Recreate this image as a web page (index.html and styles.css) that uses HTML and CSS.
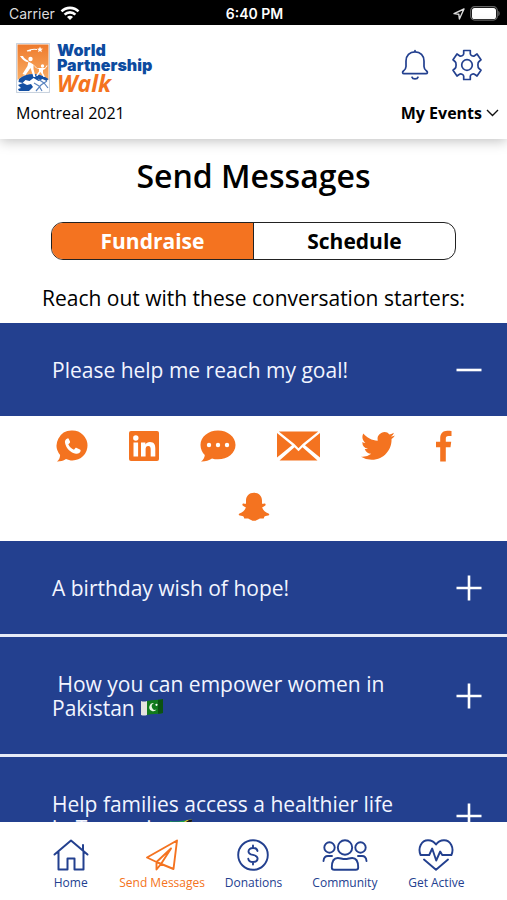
FILE: index.html
```html
<!DOCTYPE html>
<html lang="en">
<head>
<meta charset="utf-8">
<meta name="viewport" content="width=device-width, initial-scale=1">
<title>Send Messages</title>
<link rel="stylesheet" href="styles.css">
</head>
<body>
<div class="status">
  <div class="status-left">
    <span>Carrier</span>
    <svg width="20" height="15" viewBox="0 0 20 15" fill="none" stroke="#fff" stroke-width="2.6"><path d="M1.5 5.4a12 12 0 0 1 17 0M4.6 8.6a7.6 7.6 0 0 1 10.8 0"/><path d="M10 14l-3-3a4.2 4.2 0 0 1 6 0z" fill="#fff" stroke="none"/></svg>
  </div>
  <span class="status-time">6:40 PM</span>
  <div class="status-right">
    <svg width="12" height="12" viewBox="0 0 12 12" fill="none" stroke="#ddd" stroke-width="1.4" stroke-linejoin="round"><path d="M11 1L1 5.6l4.8.6.6 4.8z"/></svg>
    <svg width="30" height="15" viewBox="0 0 30 15"><rect x=".7" y=".7" width="26.6" height="13.4" rx="4" fill="none" stroke="#666" stroke-width="1.2"/><rect x="2" y="2" width="24" height="11" rx="2.6" fill="#fff"/><path d="M28.4 5c1.6.6 1.6 4.400 0 5z" fill="#777"/></svg>
  </div>
</div>

<header class="header">
  <div class="header-row">
    <a class="logo" href="#" aria-label="World Partnership Walk">
      <svg width="34" height="50" viewBox="0 0 34 50">
        <defs><linearGradient id="sky" x1="0" y1="0" x2="0" y2="1"><stop offset="0" stop-color="#ee7a2c"/><stop offset="1" stop-color="#f9ad64"/></linearGradient></defs>
        <rect x=".6" y=".6" width="32.800" height="48.800" fill="#fff" stroke="#c3cedb" stroke-width="1"/>
        <rect x="1.500" y="1.500" width="31" height="36" fill="url(#sky)"/>
        <path d="M1.500 37Q8 31 17 31t15.500 6v11.500h-31z" fill="#fff"/>
        <path d="M3 36Q9 31 17 31t15.500 5l-2 2-4-2-4 2-5-3-4 3-4-1-3 3-4-1z" fill="#1450a3"/>
        <path d="M2 42l5-2 4 2 4-1 2 3-4 4H3l-1-2 3-1z" fill="#1450a3"/>
        <path d="M18 40l5 3 3 5M31 38l-6 4-5 6M22 36l6 4 4 5" fill="none" stroke="#5b85c0" stroke-width="1.200"/>
        <path d="M11 8c4-2 7-2 10-1.500M11 8l4-.4" fill="none" stroke="#fff" stroke-width="1.200"/>
        <path d="M24 3.500l.8 2 2.200.2-1.700 1.400.5 2.200-1.800-1.200-2 1.200.6-2.200-1.600-1.400 2.200-.2z" fill="#fff"/>
        <circle cx="14.500" cy="16" r="2.200" fill="#fff"/><circle cx="26.500" cy="23" r="1.700" fill="#fff"/>
        <path d="M4 13c3 4 5 6 9 6 3 1 5 3 8 6l3 0 5 0 2-3 .5 1-2.500 3-2 1 0 3 2 4-1.500 0-3-5-3 4-1.500-.5 3-4 0-2.500-3-1-2.500-3 0 4 2 8-2 0-3-9-5 7-3-1 5-8 1-5c-3-2-5-3-5.500-5z" fill="#fff"/>
      </svg>
      <span class="logo-text"><span class="logo-name">World<br>Partnership</span><span class="logo-walk">Walk</span></span>
    </a>
    <div class="header-actions">
      <button class="icon-btn" aria-label="Notifications">
        <svg width="28" height="32" viewBox="0 0 28 32" fill="none" stroke="#23408f" stroke-width="1.700" stroke-linejoin="round" stroke-linecap="round"><path d="M14 1.500v1.300M14 2.800c-5.400 0-9 4-9 9.200v5.500c0 2-1 3.300-2.600 4.500-1.400 1.200-.9 2.700.6 2.700h22c1.500 0 2-1.500.6-2.700-1.600-1.200-2.600-2.500-2.600-4.500V12c0-5.200-3.600-9.200-9-9.200zM11 28.200c.7 2.300 5.300 2.300 6 0"/></svg>
      </button>
      <button class="icon-btn" aria-label="Settings">
        <svg width="32" height="32" viewBox="0 0 32 32" fill="none" stroke="#23408f" stroke-width="1.700" stroke-linejoin="round"><circle cx="16" cy="16" r="5.300"/><path d="M12.700 1.500h6.600v3.200c0 1 .5 1.500 1.600 2 1 .5 1.800.6 2.600 0l2.500-1.700 4 5.800-2 1.700c-.9.700-1.100 1.400-1.100 3.500s.2 2.800 1.100 3.500l2 1.700-4 5.800-2.500-1.700c-.8-.6-1.600-.5-2.600 0-1.100.5-1.600 1-1.600 2v3.200h-6.600v-3.200c0-1-.5-1.500-1.600-2-1-.5-1.800-.6-2.600 0L6 27l-4-5.800 2-1.700c.9-.7 1.100-1.400 1.100-3.500s-.2-2.800-1.100-3.500l-2-1.700L6 5l2.500 1.700c.8.6 1.600.5 2.600 0 1.100-.5 1.600-1 1.600-2z"/></svg>
      </button>
    </div>
  </div>
  <div class="header-row">
    <span class="event">Montreal 2021</span>
    <button class="my-events">My Events
      <svg width="13" height="8" viewBox="0 0 13 8" fill="none" stroke="#111" stroke-width="1.400"><path d="M1 1l5.500 5.500L12 1"/></svg>
    </button>
  </div>
</header>

<main class="main">
  <h1 class="title">Send Messages</h1>
  <div class="segment">
    <button class="segment-btn active" aria-pressed="true">Fundraise</button>
    <button class="segment-btn" aria-pressed="false">Schedule</button>
  </div>
  <p class="intro">Reach out with these conversation starters:</p>

  <button class="topic" aria-expanded="true"><span class="topic-text">Please help me reach my goal!</span>
    <svg width="26" height="26" viewBox="0 0 26 26"><path d="M.5 13h25" stroke="#fff" stroke-width="2.600"/></svg></button>
  <div class="share">
    <a href="#" aria-label="WhatsApp"><svg width="32" height="32" viewBox="0 0 32 32"><path d="M16.500.5A15 15 0 0 1 16.500 30.500c-2.400 0-4.600-.6-6.500-1.500-3 1.900-6 2.600-9 2.500 2-1.600 3-3.700 3.100-6.500A15 15 0 0 1 16.500.5z" fill="#f47320"/><path d="M11.600 8.400c-1.800.4-3 2.200-2.600 4.400 1 5.600 5.500 10 11 11 2.300.3 4.300-.9 4.600-2.700.1-.8-.1-1.200-.7-1.500l-3.200-1.600c-.6-.3-1.100-.2-1.500.3l-1.200 1.500c-2.600-1-4.700-3.100-5.700-5.500l1.400-1.400c.4-.4.500-.9.300-1.400l-1.200-2.600c-.3-.5-.6-.7-1.200-.5z" fill="#fff"/></svg></a>
    <a href="#" aria-label="LinkedIn"><svg width="30" height="32" viewBox="0 0 30 32"><rect y="1" width="30" height="30" rx="2" fill="#f47320"/><circle cx="6.800" cy="8" r="2.700" fill="#fff"/><path d="M4.500 12.500h4.600v14H4.500zM12 12.500h4.400v2c.8-1.400 2.400-2.400 4.500-2.400 4.400 0 5.400 2.800 5.400 6.700v7.700h-4.600v-6.800c0-1.900-.3-3.700-2.400-3.700-2.200 0-2.700 1.700-2.700 3.600v6.900H12z" fill="#fff"/></svg></a>
    <a href="#" aria-label="Text message"><svg width="36" height="32" viewBox="0 0 36 32"><path d="M18 .5c9.700 0 17.500 6.400 17.500 14.400S27.700 29.300 18 29.300c-2.200 0-4.200-.3-6-.9-3.200 2.200-7 3.200-11 3 2.400-1.700 3.700-3.900 3.800-6.500C2.200 22.400.5 18.800.5 14.900.5 6.900 8.300.5 18 .5z" fill="#f47320"/><g fill="#fff"><circle cx="9" cy="15" r="2.200"/><circle cx="18" cy="15" r="2.200"/><circle cx="27" cy="15" r="2.200"/></g></svg></a>
    <a href="#" aria-label="Email"><svg width="43" height="32" viewBox="0 0 43 32" fill="#f47320"><path d="M1.800 1.500h39.400L25.600 14l-4.100 4.200L17.400 14zM0 3l15 12.200L0 27.500zM43 3v24.500L28 15.200zM2.500 30.500l15-13.200 4 3.900 4-3.900 15 13.200z"/></svg></a>
    <a href="#" aria-label="Twitter"><svg width="34" height="32" viewBox="0 1.500 24 21" fill="#f47320"><path d="M23.950 4.570a10 10 0 0 1-2.820.77 4.960 4.960 0 0 0 2.160-2.720c-.95.560-2 .96-3.120 1.180a4.920 4.920 0 0 0-8.380 4.490C7.690 8.090 4.070 6.130 1.640 3.160a4.820 4.820 0 0 0-.67 2.470c0 1.710.87 3.210 2.190 4.100a4.900 4.900 0 0 1-2.230-.62v.06a4.920 4.920 0 0 0 3.950 4.830 5 5 0 0 1-2.210.08 4.940 4.940 0 0 0 4.600 3.420A9.870 9.870 0 0 1 0 19.540a14 14 0 0 0 7.560 2.210c9.050 0 14-7.500 14-13.980 0-.21 0-.42-.02-.63a9.940 9.940 0 0 0 2.410-2.570z"/></svg></a>
    <a href="#" aria-label="Facebook"><svg width="16" height="32" viewBox="0 0 16 32" fill="#f47320"><path d="M4.200 31.500V17.200H0v-5.400h4.200V8.200C4.200 3.500 7 .8 11.300.8c1.900 0 3.700.2 4.200.3v5h-3c-2.200 0-2.700 1.100-2.700 2.700v3h5.400l-.7 5.400H9.800v14.300z"/></svg></a>
    <a href="#" aria-label="Snapchat"><svg width="32" height="30" viewBox="0 0 32 30" fill="#f47320"><path d="M16 .8c4.900 0 8 3.300 8 8v3c1.200.2 2.800-.8 3.400.2.900 1.500-1.100 2.200-3.200 3.300.8 3 2.800 5 6.300 6.300 1.400.6.700 1.500-.4 2-1.600.7-3.300.3-3.900 1.300-.3.700-.2 1.500-.9 1.600-1.200.2-2.600-.3-4 .2-1.700.8-3 2.100-5.300 2.100s-3.600-1.300-5.300-2.100c-1.400-.5-2.800 0-4-.2-.7-.1-.6-.9-.9-1.600-.6-1-2.300-.6-3.900-1.300-1.100-.5-1.800-1.400-.4-2 3.500-1.300 5.500-3.300 6.300-6.300-2.100-1.100-4.100-1.800-3.200-3.300.6-1 2.200 0 3.400-.2v-3c0-4.700 3.100-8 8-8z"/></svg></a>
  </div>

  <button class="topic" aria-expanded="false"><span class="topic-text">A birthday wish of hope!</span>
    <svg width="26" height="26" viewBox="0 0 26 26"><path d="M.5 13h25M13 .5v25" stroke="#fff" stroke-width="2.600"/></svg></button>
  <button class="topic" aria-expanded="false"><span class="topic-text">&nbsp;How you can empower women in Pakistan
    <svg class="flag" role="img" aria-label="Pakistan" width="24" height="18" viewBox="0 0 24 18"><path d="M1 2q3 1 6 0v14q-3 1-6 0z" fill="#e4e4e0"/><path d="M7 2q4-1 8-1t8-1v14q-4 1-8 1t-8 1z" fill="#117a1c"/><path d="M18 0.700q3-.1 5-.7v14q-2 .6-5 .8z" fill="#0b5212"/><path d="M16.500 10.500a4 4 0 1 1-2.600-6.300 3.300 3.300 0 1 0 2.600 6.300z" fill="#e9f3e4"/><circle cx="16.500" cy="5.800" r="1.100" fill="#fff"/></svg></span>
    <svg width="26" height="26" viewBox="0 0 26 26"><path d="M.5 13h25M13 .5v25" stroke="#fff" stroke-width="2.600"/></svg></button>
  <button class="topic" aria-expanded="false"><span class="topic-text">Help families access a healthier life in Tanzania
    <svg class="flag" role="img" aria-label="Tanzania" width="24" height="18" viewBox="0 0 24 18"><path d="M1 2q5.500 1 11 0t11-1.500v14q-5.500.5-11 1.500t-11 0z" fill="#19a04a"/><path d="M23 .5v14q-5.500.5-11 1.500H7z" fill="#1593cf"/><path d="M1 16V12L18 1l5-.5V4L7 16z" fill="#e8c531"/><path d="M1 16v-2.600L20 .9l3-.4v2L5 16z" fill="#191919"/></svg></span>
    <svg width="26" height="26" viewBox="0 0 26 26"><path d="M.5 13h25M13 .5v25" stroke="#fff" stroke-width="2.600"/></svg></button>
</main>

<nav class="tabs">
  <a class="tab" href="#">
    <svg width="36" height="32" viewBox="0 0 36 32" fill="none" stroke="#23408f" stroke-width="2" stroke-linecap="round" stroke-linejoin="round"><path d="M1.500 15.500L18 1.500l16.500 14M5.500 12.500v18h9v-11h7v11h9v-18M30 11V6"/></svg>
    Home</a>
  <a class="tab current" href="#" aria-current="page">
    <svg width="36" height="32" viewBox="0 0 36 32" fill="none" stroke="#f47320" stroke-width="1.900" stroke-linecap="round" stroke-linejoin="round"><path d="M33 1.500L3 18.500l9.500 4.500L29.500 30zM12.500 23v7.500l4.500-5.500M27 9.500L12.500 23M27 9.500L17 25"/></svg>
    Send Messages</a>
  <a class="tab" href="#">
    <svg width="32" height="32" viewBox="0 0 32 32" fill="none" stroke="#23408f" stroke-width="1.900" stroke-linecap="round"><circle cx="16" cy="16" r="14.800"/><path d="M20.500 12c-.4-2-2-3-4.500-3-2.700 0-4.500 1.300-4.500 3.400 0 2.300 2 3 4.500 3.500s4.600 1.300 4.600 3.700c0 2.100-1.900 3.400-4.600 3.400-2.600 0-4.400-1.200-4.700-3.200M16 6.500V9M16 23v2.500"/></svg>
    Donations</a>
  <a class="tab" href="#">
    <svg width="46" height="32" viewBox="0 0 46 32" fill="none" stroke="#23408f" stroke-width="1.900" stroke-linecap="round" stroke-linejoin="round"><circle cx="23" cy="8.500" r="7.200"/><circle cx="7.500" cy="8.500" r="5.200"/><circle cx="38.500" cy="8.500" r="5.200"/><path d="M9.800 28.500c0-6 1.500-9.500 6-9.500 2.500 0 4.300 1 7.200 1s4.700-1 7.200-1c4.500 0 6 3.500 6 9.500 0 1.500-.8 2.300-2.400 2.300H12.200c-1.600 0-2.400-.8-2.400-2.300zM1.500 22c.3-3.500 1.500-5 4.500-5h4M44.500 22c-.3-3.500-1.500-5-4.500-5h-4"/></svg>
    Community</a>
  <a class="tab" href="#">
    <svg width="36" height="32" viewBox="0 0 36 32" fill="none" stroke="#23408f" stroke-width="1.900" stroke-linecap="round" stroke-linejoin="round"><path d="M2.600 16C-.5 9 3.500 1.300 10 1.300c3.500 0 6.300 1.700 8 4.300 1.700-2.600 4.500-4.300 8-4.300 6.500 0 10.500 7.700 7.400 14.700M2.600 16h8.600l3-6.500 4 12 4-9 2 3.500h9.200M6 20.500l12 10.300 12-10.300"/></svg>
    Get Active</a>
</nav>
</body>
</html>
```
FILE: styles.css
```css
* {
  box-sizing: border-box;
}

body {
  margin: 0;
  height: 100vh;
  display: flex;
  flex-direction: column;
  background: #fff;
  color: #000;
  font-family: "Open Sans", "Noto Sans", sans-serif;
}

button {
  border: 0;
  padding: 0;
  background: none;
  color: inherit;
  font: inherit;
  cursor: pointer;
}

a {
  color: inherit;
  text-decoration: none;
}

svg {
  display: block;
  flex: none;
}

/* Device status bar */
.status {
  flex: none;
  display: grid;
  grid-template-columns: 1fr auto 1fr;
  align-items: center;
  height: 25px;
  padding: 2px 7px 0 9px;
  background: #000;
  color: #fff;
  font-family: Inter, Roboto, sans-serif;
  font-size: 14px;
}

.status-left,
.status-right {
  display: flex;
  align-items: center;
  gap: 5px;
  color: #ddd;
}

.status-right {
  justify-content: flex-end;
}

.status-time {
  font-weight: 600;
}

/* Header */
.header {
  position: relative;
  flex: none;
  display: flex;
  flex-direction: column;
  gap: 7px;
  padding: 18px 8px 14px 16px;
  background: #fff;
  box-shadow: 0 2px 12px rgba(0, 0, 0, 0.25);
}

.header-row {
  display: flex;
  justify-content: space-between;
  align-items: flex-start;
}

.logo {
  display: flex;
  gap: 7px;
}

.logo-text {
  display: flex;
  flex-direction: column;
}

.logo-name {
  color: #0d4b9f;
  font-family: Inter, sans-serif;
  font-size: 16px;
  font-weight: 900;
  line-height: 15px;
}

.logo-walk {
  color: #f47320;
  font-size: 23px;
  font-style: italic;
  font-weight: 700;
  line-height: 21px;
}

.header-actions {
  display: flex;
  gap: 22px;
  padding: 6px 16px 0 0;
}

.event {
  font-size: 16px;
  line-height: 24px;
}

.my-events {
  display: flex;
  align-items: center;
  gap: 4px;
  font-size: 16px;
  font-weight: 700;
  line-height: 24px;
}

/* Content */
.main {
  flex: 1;
  min-height: 0;
  overflow: hidden;
}

.title {
  margin: 17px 0 26px;
  font-size: 32px;
  font-weight: 600;
  line-height: 40px;
  text-align: center;
}

.segment {
  display: flex;
  margin: 0 51px;
  overflow: hidden;
  border: 1px solid #222;
  border-radius: 12px;
}

.segment-btn {
  flex: 1;
  font-size: 21px;
  font-weight: 700;
  line-height: 36px;
}

.segment-btn + .segment-btn {
  border-left: 1px solid #222;
}

.segment-btn.active {
  background: #f47320;
  color: #fff;
}

.intro {
  margin: 24px 0 11px;
  font-size: 21px;
  line-height: 28px;
  text-align: center;
}

.topic {
  display: flex;
  justify-content: space-between;
  align-items: center;
  width: 100%;
  padding: 35px 25px 34px 52px;
  background: #23408f;
  color: #f2f5ff;
  font-size: 21px;
  line-height: 24px;
  text-align: left;
}

.topic + .topic {
  border-top: 3px solid #e6ebf7;
}

.topic > svg {
  margin: -1px 0;
}

.topic-text {
  max-width: 350px;
}

.flag {
  display: inline-block;
  vertical-align: -1px;
}

.share {
  display: flex;
  flex-wrap: wrap;
  justify-content: center;
  gap: 30px 41px;
  padding: 14px 50px 19px;
}

/* Bottom navigation */
.tabs {
  flex: none;
  display: grid;
  grid-template-columns: repeat(5, 1fr);
  padding: 17px 25px 9px;
  background: #fff;
}

.tab {
  display: flex;
  flex-direction: column;
  align-items: center;
  gap: 4px;
  color: #23408f;
  font-size: 12px;
  line-height: 16px;
  white-space: nowrap;
}

.tab.current {
  color: #f47320;
}
```
